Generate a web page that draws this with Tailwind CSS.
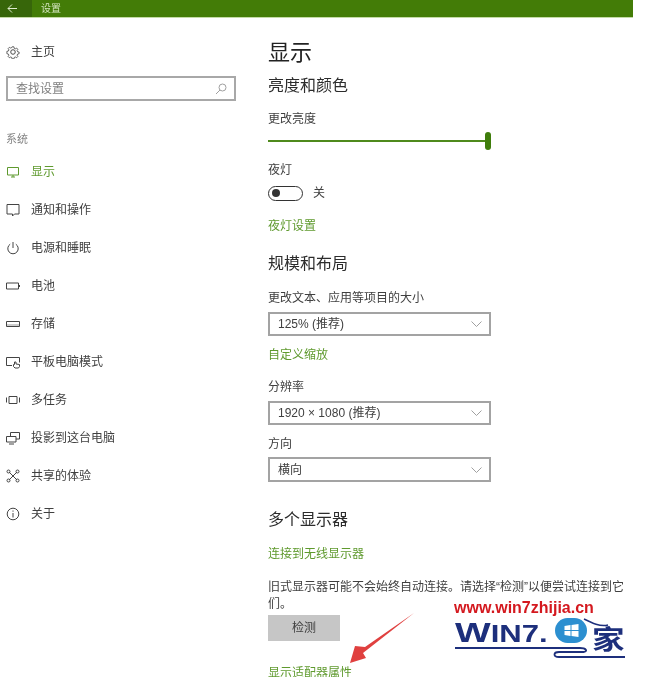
<!DOCTYPE html>
<html lang="zh-CN">
<head>
<meta charset="utf-8">
<script src="https://cdn.jsdelivr.net/npm/@tailwindcss/browser@4"></script>
</head>
<body class="bg-white">
<div class="relative w-[650px] h-[677px] overflow-hidden bg-white text-[12px] leading-[20px] text-[#404040] font-['Liberation_Sans','Noto_Sans_CJK_SC',sans-serif] blur-[0.35px]">
  <header class="w-[633px] h-[18px] bg-[#437c07] border-b border-[#c4dba6] flex items-center text-[#d5e6bf] text-[10px]">
    <div class="w-[32px] h-full bg-[#37660a] flex items-center pl-[7px]">
      <svg width="11" height="10" viewBox="0 0 11 10" fill="none" stroke="#dfeccf" stroke-width="1"><path d="M10 4.500H1M5 .5l-4 4 4 4"/></svg>
    </div>
    <span class="ml-[9px]">设置</span>
  </header>
  <div class="flex">
    <aside class="w-[268px] shrink-0 pt-[15px]">
      <div class="h-[38px] flex items-center pl-[6px]">
        <svg class="w-[14px] h-[14px] mr-[11px]" viewBox="0 0 16 16" fill="none" stroke="#444" stroke-width="1.100"><circle cx="8" cy="8" r="2.600"/><path d="M6.800 1h2.400l.4 2 1.500.7 1.800-1 1.600 1.700-1 1.700.7 1.600 2 .4v2.200l-2 .5-.7 1.500 1 1.800-1.600 1.600-1.800-1-1.500.7-.4 2H6.800l-.4-2-1.500-.7-1.800 1-1.600-1.600 1-1.800-.7-1.500-2-.5V7.100l2-.4.7-1.600-1-1.700 1.600-1.700 1.800 1 1.500-.7z" transform="translate(1.200 1.200) scale(.85)"/></svg>
        <span>主页</span>
      </div>
      <div class="mt-[5px] ml-[6px] w-[230px] h-[25px] border-2 border-[#a8a8a8] flex items-center justify-between pl-[8px] pr-[7px] text-[#808080]">
        <span>查找设置</span>
        <svg width="12" height="12" viewBox="0 0 12 12" fill="none" stroke="#a0a0a0"><circle cx="7.500" cy="4.500" r="3.500"/><path d="M5 7l-4 4"/></svg>
      </div>
      <div class="mt-[28px] pl-[6px] text-[11px] text-[#858585]">系统</div>
      <nav class="mt-[4px]">
        <div class="h-[38px] flex items-center pl-[6px] text-[#5f9a2e]">
          <svg class="w-[14px] h-[14px] mr-[11px]" viewBox="0 0 14 14" fill="none" stroke="#5f9a2e"><path d="M1.500 2.500h11v7.500h-11zM5 12h4M7 10v2"/></svg>
          <span>显示</span>
        </div>
        <div class="h-[38px] flex items-center pl-[6px]">
          <svg class="w-[14px] h-[14px] mr-[11px]" viewBox="0 0 14 14" fill="none" stroke="#444"><path d="M1 1.500h12v9.500H8.500L6.500 13V11H1z"/></svg>
          <span>通知和操作</span>
        </div>
        <div class="h-[38px] flex items-center pl-[6px]">
          <svg class="w-[14px] h-[14px] mr-[11px]" viewBox="0 0 14 14" fill="none" stroke="#444"><path d="M4.200 3.200a5.200 5.200 0 1 0 5.600 0M7 1v6"/></svg>
          <span>电源和睡眠</span>
        </div>
        <div class="h-[38px] flex items-center pl-[6px]">
          <svg class="w-[14px] h-[14px] mr-[11px]" viewBox="0 0 14 14" fill="none" stroke="#444"><path d="M.5 4h12v6H.5zM13.500 6v2"/></svg>
          <span>电池</span>
        </div>
        <div class="h-[38px] flex items-center pl-[6px]">
          <svg class="w-[14px] h-[14px] mr-[11px]" viewBox="0 0 14 14" fill="none" stroke="#444"><path d="M.5 4.500h13v5H.5z"/><path d="M1 8h12" stroke="#999"/></svg>
          <span>存储</span>
        </div>
        <div class="h-[38px] flex items-center pl-[6px]">
          <svg class="w-[14px] h-[14px] mr-[11px]" viewBox="0 0 14 14" fill="none" stroke="#444"><path d="M6 10.500H.5v-8h13v5"/><path d="M8.500 7v2.500H7.500v2l1.500 1.500h3.500l1-1.500V9.500l-3.500-.5V7z"/></svg>
          <span>平板电脑模式</span>
        </div>
        <div class="h-[38px] flex items-center pl-[6px]">
          <svg class="w-[14px] h-[14px] mr-[11px]" viewBox="0 0 14 14" fill="none" stroke="#444"><path d="M3 3.500h8v7H3zM.5 4.500v5M13.500 4.500v5"/></svg>
          <span>多任务</span>
        </div>
        <div class="h-[38px] flex items-center pl-[6px]">
          <svg class="w-[14px] h-[14px] mr-[11px]" viewBox="0 0 14 14" fill="none" stroke="#444"><path d="M4.500 5V1.500h9V8H10M.5 5.500h9.500V11H.5zM3 13h5"/></svg>
          <span>投影到这台电脑</span>
        </div>
        <div class="h-[38px] flex items-center pl-[6px]">
          <svg class="w-[14px] h-[14px] mr-[11px]" viewBox="0 0 14 14" fill="none" stroke="#444"><path d="M3 3l8 8M11 3l-8 8"/><circle cx="2.500" cy="2.500" r="1.500"/><circle cx="11.500" cy="2.500" r="1.500"/><circle cx="2.500" cy="11.500" r="1.500"/><circle cx="11.500" cy="11.500" r="1.500"/></svg>
          <span>共享的体验</span>
        </div>
        <div class="h-[38px] flex items-center pl-[6px]">
          <svg class="w-[14px] h-[14px] mr-[11px]" viewBox="0 0 14 14" fill="none" stroke="#444"><circle cx="7" cy="7" r="5.800"/><path d="M7 6v4.500M7 3.500v1.200"/></svg>
          <span>关于</span>
        </div>
      </nav>
    </aside>
    <main class="w-[358px] pt-[19px]">
      <h1 class="text-[22px] leading-[32px] text-[#222]">显示</h1>
      <h2 class="mt-[5px] text-[16px] leading-[24px] text-[#2c2c2c]">亮度和颜色</h2>
      <p class="mt-[11px]">更改亮度</p>
      <div class="mt-[3px] w-[223px] h-[18px] flex items-center">
        <div class="flex-1 h-[2px] bg-[#4f8a1c]"></div>
        <div class="w-[6px] h-[18px] rounded-[3px] bg-[#3f7d0b]"></div>
      </div>
      <p class="mt-[10px]">夜灯</p>
      <div class="mt-[5px] h-[16px] flex items-center">
        <div class="w-[35px] h-[15px] rounded-full border-[1.5px] border-[#333] flex items-center pl-[3px]">
          <div class="w-[8px] h-[8px] rounded-full bg-[#333]"></div>
        </div>
        <span class="ml-[10px]">关</span>
      </div>
      <a class="block mt-[15px] text-[#5f9a2e]">夜灯设置</a>
      <h2 class="mt-[16px] text-[16px] leading-[24px] text-[#2c2c2c]">规模和布局</h2>
      <p class="mt-[12px]">更改文本、应用等项目的大小</p>
      <div class="mt-[4px] w-[223px] h-[24px] border-2 border-[#a3a3a3] flex items-center justify-between pl-[8px] pr-[7px]">
        <span>125% (推荐)</span>
        <svg width="11" height="6" viewBox="0 0 11 6" fill="none" stroke="#a0a0a0"><path d="M.5.5l5 5 5-5"/></svg>
      </div>
      <a class="block mt-[9px] text-[#5f9a2e]">自定义缩放</a>
      <p class="mt-[12px]">分辨率</p>
      <div class="mt-[4px] w-[223px] h-[24px] border-2 border-[#a3a3a3] flex items-center justify-between pl-[8px] pr-[7px]">
        <span>1920 × 1080 (推荐)</span>
        <svg width="11" height="6" viewBox="0 0 11 6" fill="none" stroke="#a0a0a0"><path d="M.5.5l5 5 5-5"/></svg>
      </div>
      <p class="mt-[9px]">方向</p>
      <div class="mt-[3px] w-[223px] h-[25px] border-2 border-[#a3a3a3] flex items-center justify-between pl-[8px] pr-[7px]">
        <span>横向</span>
        <svg width="11" height="6" viewBox="0 0 11 6" fill="none" stroke="#a0a0a0"><path d="M.5.5l5 5 5-5"/></svg>
      </div>
      <h2 class="mt-[26px] text-[16px] leading-[24px] text-[#2c2c2c]">多个显示器</h2>
      <a class="block mt-[12px] text-[#5f9a2e]">连接到无线显示器</a>
      <p class="mt-[15px] leading-[17px] w-[358px]">旧式显示器可能不会始终自动连接。请选择“检测”以便尝试连接到它们。</p>
      <button class="mt-[2px] block w-[72px] h-[26px] bg-[#c6c6c6] text-center">检测</button>
      <a class="block mt-[22px] text-[#5f9a2e]">显示适配器属性</a>
    </main>
  </div>
  <svg class="absolute left-[345px] top-[610px]" width="75" height="60" viewBox="0 0 75 60"><path d="M69 3 20 37l-10-1-5 17 16-5-3-5z" fill="#e0403f"/></svg>
  <div class="absolute left-[454px] top-[598px] text-[16px] leading-[20px] font-bold text-[#d4191f] whitespace-nowrap">www.win7zhijia.cn</div>
  <div class="absolute left-[455px] top-[618px] w-[172px] h-[40px]">
    <span class="absolute left-0 top-[1px] text-[28px] leading-[28px] font-bold text-[#1d2f7c] origin-left scale-x-[1.35] whitespace-nowrap">W<span class="text-[23px]">IN7.</span></span>
    <div class="absolute left-[100px] top-0 w-[32px] h-[25px] rounded-full bg-[#2c8fd0] flex items-center justify-center">
      <svg width="17" height="14" viewBox="0 0 16 14" fill="#fff"><path d="M1 2l6-1v5H1zM8 1l7-1v6H8zM1 7h6v5l-6-1zM8 7h7v6l-7-1z"/></svg>
    </div>
    <span class="absolute left-[137px] top-[6px] text-[26px] leading-[28px] font-bold text-[#1d2f7c] whitespace-nowrap origin-left scale-x-[1.25] font-['Noto_Sans_CJK_SC',sans-serif]">家</span>
    <svg class="absolute left-0 top-0" width="172" height="42" viewBox="0 0 172 42" fill="none" stroke="#1d2f7c"><path d="M0 30H125c6 0 8 3 4 4H104c-6 0-6 5 0 5h66" stroke-width="1.800"/><path d="M129 1c8 4 16 8 24 6" stroke-width="1.500"/></svg>
  </div>
</div>
</body>
</html>
